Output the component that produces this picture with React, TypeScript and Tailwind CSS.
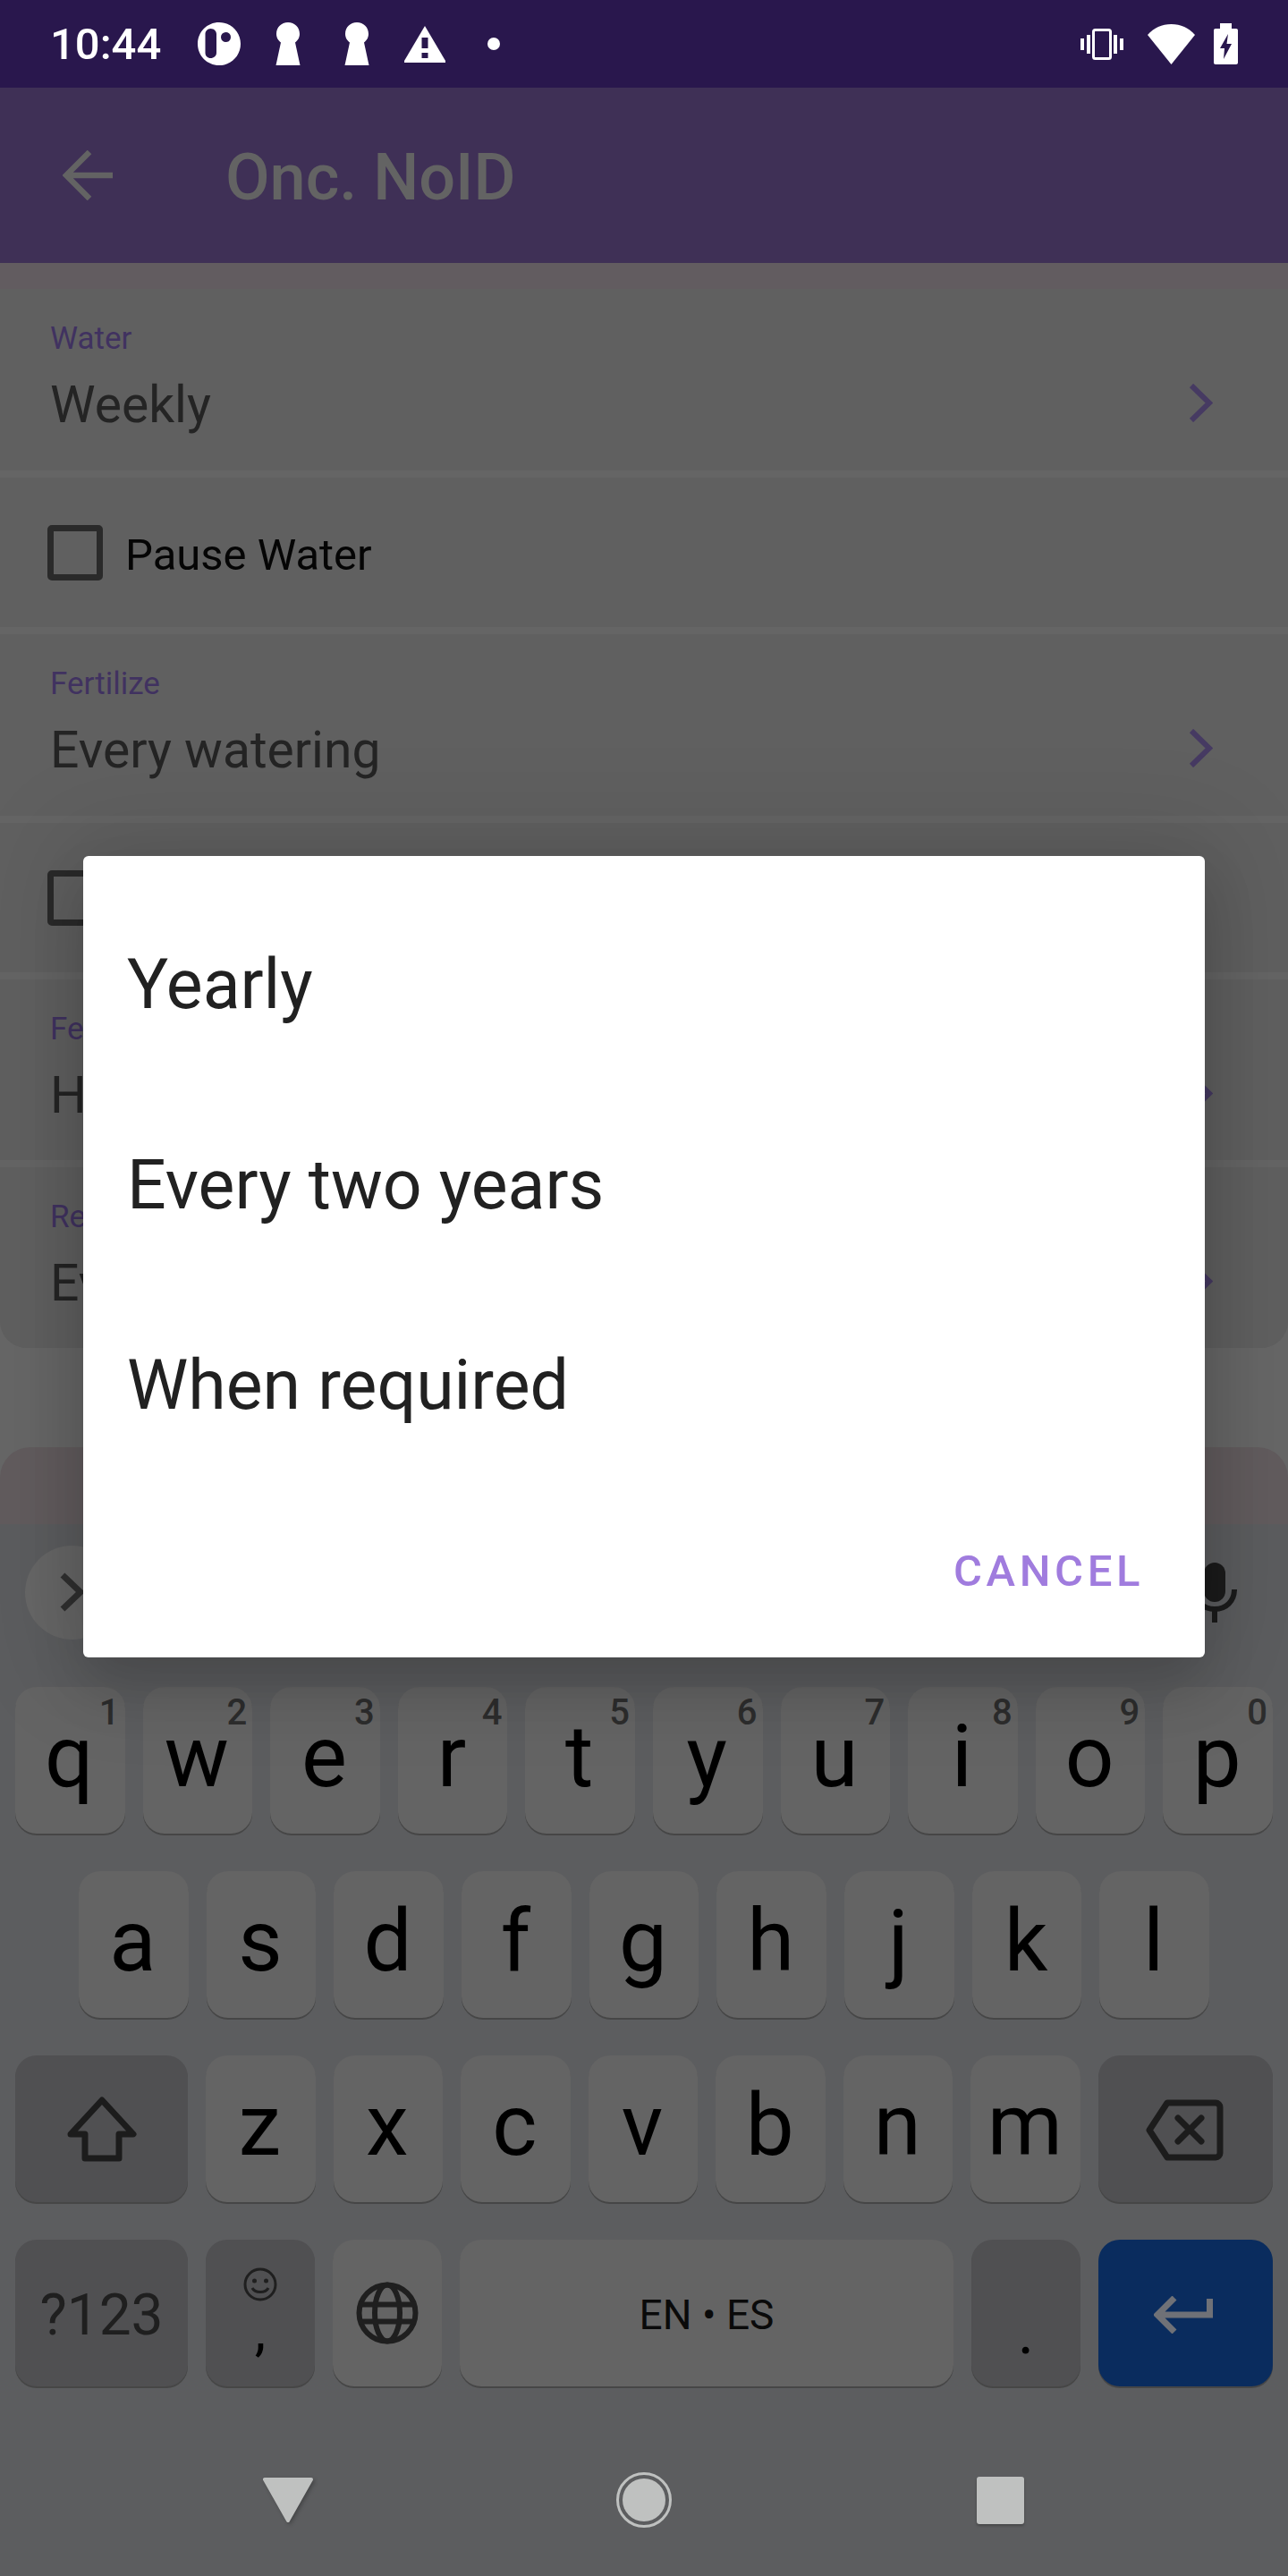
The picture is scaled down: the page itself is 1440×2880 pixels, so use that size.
import React from "react";

const ROW_ONE = [
  ["q", "1"],
  ["w", "2"],
  ["e", "3"],
  ["r", "4"],
  ["t", "5"],
  ["y", "6"],
  ["u", "7"],
  ["i", "8"],
  ["o", "9"],
  ["p", "0"],
];
const ROW_TWO = ["a", "s", "d", "f", "g", "h", "j", "k", "l"];
const ROW_THREE = ["z", "x", "c", "v", "b", "n", "m"];
const OPTIONS = ["Yearly", "Every two years", "When required"];

function Key({ label, hint }: { label: string; hint?: string }) {
  return (
    <div className="relative flex h-[164px] flex-1 items-center justify-center rounded-[24px] bg-[#646464] pr-[2px] pb-[8px] text-[96px] leading-none text-black shadow-[0_2px_0_#464646]">
      {label}
      {hint && (
        <span className="absolute top-[9px] right-[6px] text-[40px] leading-[40px] font-medium text-[#2d2d2d]">
          {hint}
        </span>
      )}
    </div>
  );
}

function ActionKey({ children, className = "w-[193px] bg-[#505052]" }: { children?: React.ReactNode; className?: string }) {
  return (
    <div className={`flex h-[164px] items-center justify-center rounded-[24px] shadow-[0_2px_0_#464646] ${className}`}>
      {children}
    </div>
  );
}

function Chevron() {
  return (
    <svg width="27" height="43" viewBox="0 0 27 43" fill="none" stroke="#463a62" strokeWidth="6">
      <path d="M3 2L23 21.5L3 41" />
    </svg>
  );
}

function SelectRow({ label, value, height, clipped }: { label: string; value: string; height: string; clipped?: boolean }) {
  return (
    <div className={`relative flex flex-col bg-[#606060] pt-[35px] pl-[56px] ${height} ${clipped ? "rounded-b-[30px]" : ""}`}>
      <span className="text-[35px] leading-[42px] text-[#403260]">{label}</span>
      <span className="mt-[18px] text-[57px] leading-[70px] text-[#242424]">{value}</span>
      <div className="absolute top-[106px] right-[84px]">
        <Chevron />
      </div>
    </div>
  );
}

function CheckRow({ label }: { label?: string }) {
  return (
    <div className="flex h-[167px] items-center gap-[25px] bg-[#606060] pl-[53px]">
      <div className="h-[62px] w-[62px] rounded-[5px] border-[7px] border-[#2a2a2a]" />
      {label && <span className="pt-[6px] text-[49px] leading-[60px] text-[#050505]">{label}</span>}
    </div>
  );
}

function StatusIcons() {
  return (
    <div className="flex items-center">
      <svg width="50" height="48" viewBox="0 0 50 48" fill="white" className="ml-[40px]">
        <path
          fillRule="evenodd"
          d="M25 0C38.5 0 49 10.7 49 24S38.5 48 25 48 1 37.3 1 24 11.5 0 25 0ZM15.5 7C12 7 9.500 10 9.500 13V34C9.500 37.500 12 40 15.500 40S22 37.500 22 34V13C22 10 19.500 7 15.500 7ZM32.500 11A5.500 5.500 0 1 0 32.500 22A5.500 5.500 0 1 0 32.500 11Z"
        />
      </svg>
      <svg width="28" height="48" viewBox="0 0 28 48" fill="white" className="ml-[38px]">
        <path d="M14 0C21.500 0 27 5.500 27 13C27 17.500 24.500 20.500 22 22.500L27.500 48H0.500L6 22.500C3.500 20.500 1 17.500 1 13C1 5.500 6.500 0 14 0Z" />
      </svg>
      <svg width="28" height="48" viewBox="0 0 28 48" fill="white" className="ml-[49px]">
        <path d="M14 0C21.500 0 27 5.500 27 13C27 17.500 24.500 20.500 22 22.500L27.500 48H0.500L6 22.500C3.500 20.500 1 17.500 1 13C1 5.500 6.500 0 14 0Z" />
      </svg>
      <svg width="46" height="41" viewBox="0 0 46 41" className="ml-[39px]">
        <path d="M23 0L46 39V41H0V39Z" fill="white" />
        <rect x="19.500" y="13" width="7" height="12" fill="#29174d" />
        <rect x="19.500" y="30" width="7" height="6" fill="#29174d" />
      </svg>
      <div className="ml-[47px] h-[14px] w-[14px] rounded-full bg-white" />
    </div>
  );
}

export default function App() {
  return (
    <div className="relative flex h-[2880px] w-[1440px] flex-col overflow-hidden bg-[#676767] font-[Roboto,sans-serif]">
      {/* status bar */}
      <div className="flex h-[98px] items-center justify-between bg-[#29174d] pr-[56px] pl-[56px]">
        <div className="flex items-center">
          <span className="text-[49px] leading-[49px] font-medium text-white">10:44</span>
          <StatusIcons />
        </div>
        <div className="flex items-center">
          <svg width="48" height="35" viewBox="0 0 48 35" fill="white">
            <rect x="0" y="11" width="4" height="13" />
            <rect x="7" y="7" width="4" height="21" />
            <rect x="37" y="7" width="4" height="21" />
            <rect x="44" y="11" width="4" height="13" />
            <rect x="14.500" y="1.500" width="19" height="32" rx="2" fill="none" stroke="white" strokeWidth="3" />
          </svg>
          <svg width="53" height="45" viewBox="0 0 53 45" fill="white" className="ml-[27px]">
            <path d="M26.500 45L0 12C7 4 16 0 26.500 0S46 4 53 12Z" />
          </svg>
          <svg width="27" height="46" viewBox="0 0 27 46" className="ml-[21px]">
            <path d="M7 0H20V6H25C26.200 6 27 6.800 27 8V44C27 45.200 26.200 46 25 46H2C0.800 46 0 45.200 0 44V8C0 6.800 0.800 6 2 6H7Z" fill="white" />
            <path d="M16 12L7 28H12L11 40L20 23H14.500Z" fill="#29174d" />
          </svg>
        </div>
      </div>

      {/* toolbar */}
      <div className="flex h-[196px] items-center bg-[#3f3056] pl-[70px]">
        <svg width="56" height="56" viewBox="0 0 56 56" fill="none" stroke="#636363" strokeWidth="6.500">
          <path d="M56 28H4M30 2L4 28L30 54" />
        </svg>
        <span className="ml-[126px] pt-[5px] text-[72px] leading-[72px] font-medium text-[#636363]">Onc. NoID</span>
      </div>

      {/* settings list */}
      <div className="h-[29px] bg-[#625c60]" />
      <div className="flex flex-col gap-[8px] rounded-b-[30px] bg-[#656565]">
        <SelectRow label="Water" value="Weekly" height="h-[203px]" />
        <CheckRow label="Pause Water" />
        <SelectRow label="Fertilize" value="Every watering" height="h-[203px]" />
        <CheckRow />
        <SelectRow label="Fe" value="H" height="h-[202px]" />
        <SelectRow label="Re" value="Ev" height="h-[202px]" clipped />
      </div>

      <div className="mt-[111px] h-[86px] rounded-t-[34px] bg-[#625c5e]" />

      {/* keyboard */}
      <div className="flex flex-1 flex-col bg-[#5c5d5f]">
        <div className="flex h-[152px] items-center justify-between pr-[57px] pl-[28px]">
          <div className="flex h-[105px] w-[105px] items-center justify-center rounded-full bg-[#676767]">
            <svg width="28" height="44" viewBox="0 0 28 44" fill="none" stroke="#303030" strokeWidth="7">
              <path d="M3 3L23 22L3 41" />
            </svg>
          </div>
          <svg width="50" height="67" viewBox="0 0 50 67" fill="none" stroke="#1b1b1b">
            <rect x="13" y="0" width="24" height="44" rx="12" fill="#1b1b1b" stroke="none" />
            <path d="M3 30C3 43 12 52 25 52S47 43 47 30M25 52V67" strokeWidth="6" />
          </svg>
        </div>

        <div className="mt-[30px] flex flex-col gap-[42px]">
          <div className="flex gap-[20px] px-[17px]">
            {ROW_ONE.map(([label, hint]) => (
              <Key key={label} label={label} hint={hint} />
            ))}
          </div>
          <div className="flex gap-[20px] px-[88px]">
            {ROW_TWO.map((label) => (
              <Key key={label} label={label} />
            ))}
          </div>
          <div className="flex gap-[20px] px-[17px]">
            <ActionKey>
              <svg width="78" height="74" viewBox="0 0 78 74" fill="none" stroke="#1c1c1c" strokeWidth="7" strokeLinejoin="round">
                <path d="M39 5L74 43H58V70H20V43H4Z" />
              </svg>
            </ActionKey>
            {ROW_THREE.map((label) => (
              <Key key={label} label={label} />
            ))}
            <ActionKey className="w-[195px] bg-[#505052] pt-[2px] pr-[2px]">
              <svg width="87" height="69" viewBox="0 0 87 69" fill="none" stroke="#1c1c1c" strokeWidth="7" strokeLinecap="round" strokeLinejoin="round">
                <path d="M24 4H78A5 5 0 0 1 83 9V60A5 5 0 0 1 78 65H24L4 34.500Z" />
                <path d="M36 21L62 47M62 21L36 47" />
              </svg>
            </ActionKey>
          </div>
          <div className="flex gap-[20px] px-[17px]">
            <ActionKey>
              <span className="pt-[5px] text-[64px] leading-[70px] text-[#1f1f1f]">?123</span>
            </ActionKey>
            <ActionKey className="w-[122px] flex-col justify-start bg-[#505052] pt-[31px] text-black">
              <svg width="38" height="38" viewBox="0 0 38 38" fill="none" stroke="#1f1f1f" strokeWidth="3">
                <circle cx="19" cy="19" r="17" />
                <circle cx="12.500" cy="15" r="2.500" fill="#1f1f1f" stroke="none" />
                <circle cx="25.500" cy="15" r="2.500" fill="#1f1f1f" stroke="none" />
                <path d="M10 23C13 29 25 29 28 23" />
              </svg>
              <span className="mt-[13px] text-[63px] leading-[40px]">,</span>
            </ActionKey>
            <ActionKey className="w-[122px] bg-[#646464]">
              <svg width="70" height="70" viewBox="0 0 70 70" fill="none" stroke="#1f1f1f" strokeWidth="6">
                <circle cx="35" cy="35" r="31.500" />
                <ellipse cx="35" cy="35" rx="14" ry="31.500" />
                <path d="M5 25.500H65M5 44.500H65" />
              </svg>
            </ActionKey>
            <div className="flex h-[164px] flex-1 items-center justify-center rounded-[24px] bg-[#646464] pt-[4px] text-[46px] leading-[60px] text-[#0a0a0a] shadow-[0_2px_0_#464646]">
              EN • ES
            </div>
            <ActionKey className="w-[122px] flex-col justify-start bg-[#505052] pt-[83px] text-black">
              <span className="text-[70px] leading-[40px]">.</span>
            </ActionKey>
            <ActionKey className="w-[195px] bg-[#0a2c5e] pt-[4px] pr-[6px]">
              <svg width="66" height="42" viewBox="0 0 66 42" fill="none" stroke="#6f7177" strokeWidth="7">
                <path d="M62.500 3V21H4M23 2L4 21L23 40" />
              </svg>
            </ActionKey>
          </div>
        </div>

        {/* nav bar */}
        <div className="flex flex-1 items-center justify-center pt-[42px]">
          <div className="flex w-[398px] justify-center">
            <svg width="62" height="54" viewBox="0 0 62 54" fill="#bfc1c0" stroke="#bfc1c0" strokeWidth="4" strokeLinejoin="round" className="drop-shadow-[2px_2px_2px_rgba(0,0,0,0.25)]">
              <path d="M5 4H57L31 50Z" />
            </svg>
          </div>
          <div className="flex w-[398px] justify-center">
            <div className="flex h-[62px] w-[62px] items-center justify-center rounded-full border-[3px] border-[#bfc1c0]">
              <div className="h-[48px] w-[48px] rounded-full bg-[#bfc1c0]" />
            </div>
          </div>
          <div className="flex w-[398px] justify-center">
            <div className="h-[53px] w-[53px] rounded-[3px] bg-[#bfc1c0] shadow-[0_2px_3px_rgba(0,0,0,0.25)]" />
          </div>
        </div>
      </div>

      {/* frequency dialog */}
      <div className="absolute top-[957px] left-[93px] flex h-[896px] w-[1254px] flex-col rounded-[6px] bg-white pt-[32px] shadow-[0_32px_60px_rgba(0,0,0,0.14),0_0_110px_24px_rgba(0,0,0,0.12)]">
        {OPTIONS.map((option) => (
          <div key={option} className="flex h-[224px] items-center pl-[49px] text-[77px] leading-[90px] text-[#212121]">
            {option}
          </div>
        ))}
        <div className="flex flex-1 items-end justify-end pr-[68px] pb-[72px]">
          <span className="text-[49px] leading-[49px] font-medium tracking-[4.6px] text-[#a07cde]">CANCEL</span>
        </div>
      </div>
    </div>
  );
}
